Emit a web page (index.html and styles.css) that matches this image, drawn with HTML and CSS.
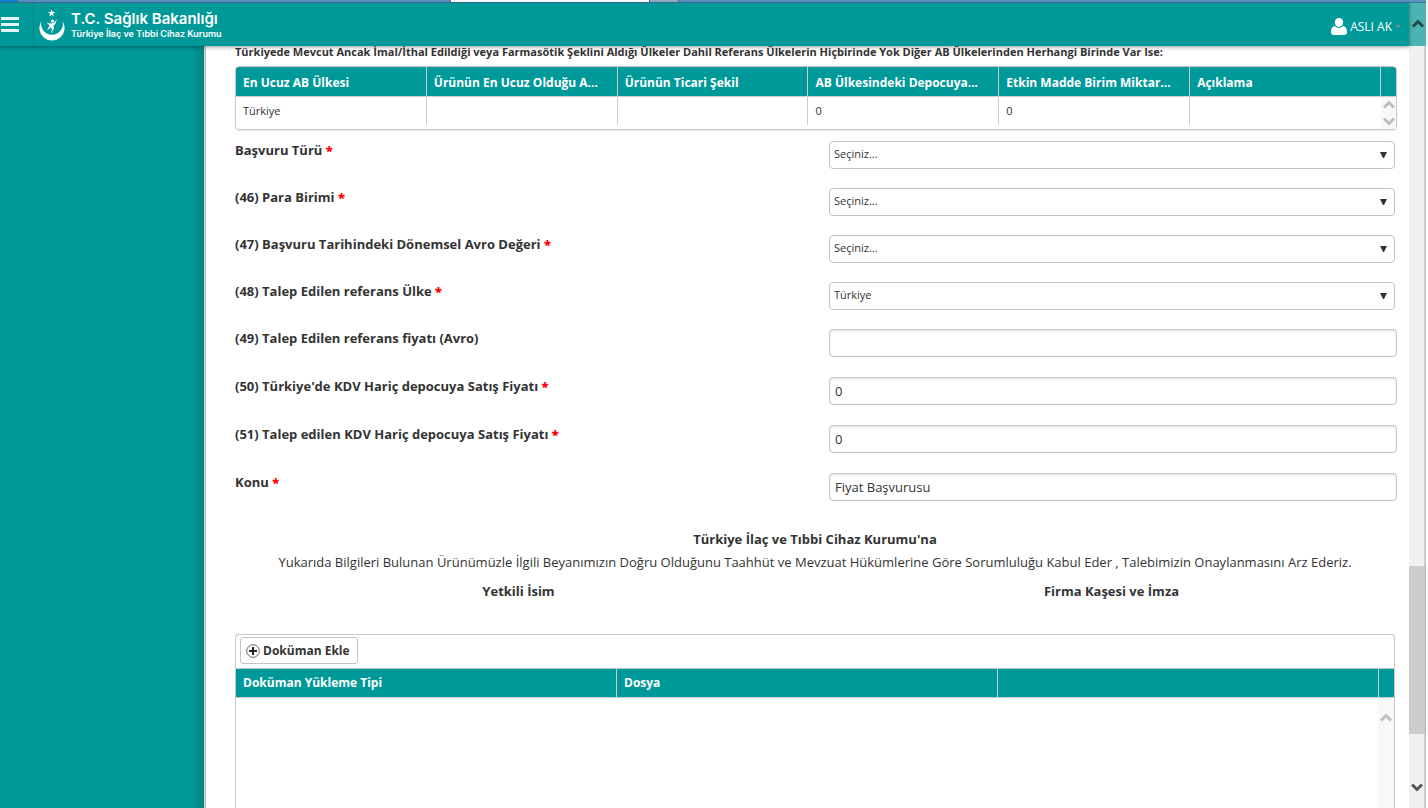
FILE: index.html
```html
<!DOCTYPE html>
<html lang="tr">
<head>
<meta charset="utf-8">
<title>Türkiye İlaç ve Tıbbi Cihaz Kurumu</title>
<link rel="stylesheet" href="styles.css">
</head>
<body>
<div class="tabstrip"><span class="tab-start"></span><span class="tab-active"></span><span class="tab-new"></span></div>
<div class="window">
  <div class="app">
    <header class="topbar">
      <button class="menu" type="button" aria-label="Menü"><svg width="18" height="15" viewBox="0 0 18 15"><path d="M0 0h18v3H0zM0 6h18v3H0zM0 12h18v3H0z" fill="#e4f3f3"/></svg></button>
      <div class="brand">
        <svg class="emblem" width="28" height="32" viewBox="0 0 28 32">
          <path d="M3.500 12A12.600 12.600 0 1 0 24.500 12A10.900 10.900 0 1 1 3.500 12Z" fill="#fff"/>
          <path d="M13.500 0.500l1 2.300 2.600.2-2 1.700.7 2.400-2.200-1.200-2.200 1.300.6-2.500-1.900-1.600 2.500-.2z" fill="#fff"/>
          <circle cx="14.500" cy="12" r="1.600" fill="#fff"/>
          <path d="M8.500 13.500l4 1 3.500-.5 3-4-1.500 4.500-2 2.500.5 2.500-3 5 1-4.700-1.500-1.300-3.500 3 2.600-5z" fill="#fff"/>
        </svg>
        <div class="brand-text"><span class="brand-name">T.C. Sağlık Bakanlığı</span><span class="brand-sub">Türkiye İlaç ve Tıbbi Cihaz Kurumu</span></div>
      </div>
      <button class="user" type="button">
        <svg width="16" height="17" viewBox="0 0 16 17"><path d="M8 0C5.300 0 3.800 1.900 3.800 4.300C3.800 7 5.600 9 8 9s4.200-2 4.200-4.700C12.200 1.900 10.700 0 8 0zM4 8C1 8.500 0 11 0 14.200C0 16 1 17 2.600 17h10.800C15 17 16 16 16 14.200C16 11 15 8.500 12 8C10.900 9.300 9.500 10 8 10S5.100 9.300 4 8z" fill="#fff"/></svg>
        <span>ASLI AK</span>
        <svg width="6" height="3" viewBox="0 0 6 3"><path d="M0 0h6L3 3z" fill="#7f8f8f"/></svg>
      </button>
    </header>
    <div class="body">
      <nav class="sidebar"></nav>
      <main class="content">
        <h2 class="section-title">Türkiyede Mevcut Ancak İmal/İthal Edildiği veya Farmasötik Şeklini Aldığı Ülkeler Dahil Referans Ülkelerin Hiçbirinde Yok Diğer AB Ülkelerinden Herhangi Birinde Var Ise:</h2>
        <div class="grid-box">
          <table class="grid">
            <thead><tr><th>En Ucuz AB Ülkesi</th><th>Ürünün En Ucuz Olduğu A...</th><th>Ürünün Ticari Şekil</th><th>AB Ülkesindeki Depocuya...</th><th>Etkin Madde Birim Miktar...</th><th>Açıklama</th><th class="scroll-col"></th></tr></thead>
            <tbody><tr><td>Türkiye</td><td></td><td></td><td>0</td><td>0</td><td class="last"></td><td class="scroll-cell" rowspan="2">
              <div class="mini-scroll"><svg width="12" height="9" viewBox="0 0 12 9"><path d="M1 7.500L6 2.500L11 7.500" fill="none" stroke="#bebebe" stroke-width="3"/></svg><svg width="12" height="9" viewBox="0 0 12 9"><path d="M1 1.500L6 6.500L11 1.500" fill="none" stroke="#bebebe" stroke-width="3"/></svg></div></td></tr>
              <tr class="filler"><td colspan="6"></td></tr></tbody>
          </table>
        </div>
        <form class="form">
          <div class="row"><label for="tur">Başvuru Türü <b>*</b></label><div class="pick"><select id="tur"><option>Seçiniz...</option></select><svg class="arrow" width="7" height="6" viewBox="0 0 7 6"><path d="M0 0h7L4 6H3z"/></svg></div></div>
          <div class="row"><label for="para">(46) Para Birimi <b>*</b></label><div class="pick"><select id="para"><option>Seçiniz...</option></select><svg class="arrow" width="7" height="6" viewBox="0 0 7 6"><path d="M0 0h7L4 6H3z"/></svg></div></div>
          <div class="row"><label for="avro">(47) Başvuru Tarihindeki Dönemsel Avro Değeri <b>*</b></label><div class="pick"><select id="avro"><option>Seçiniz...</option></select><svg class="arrow" width="7" height="6" viewBox="0 0 7 6"><path d="M0 0h7L4 6H3z"/></svg></div></div>
          <div class="row"><label for="ulke">(48) Talep Edilen referans Ülke <b>*</b></label><div class="pick"><select id="ulke"><option>Türkiye</option></select><svg class="arrow" width="7" height="6" viewBox="0 0 7 6"><path d="M0 0h7L4 6H3z"/></svg></div></div>
          <div class="row tall"><label for="ref">(49) Talep Edilen referans fiyatı (Avro)</label><input id="ref" type="text"></div>
          <div class="row tall"><label for="kdv">(50) Türkiye'de KDV Hariç depocuya Satış Fiyatı <b>*</b></label><input id="kdv" type="text" value="0"></div>
          <div class="row tall"><label for="talep">(51) Talep edilen KDV Hariç depocuya Satış Fiyatı <b>*</b></label><input id="talep" type="text" value="0"></div>
          <div class="row tall"><label for="konu">Konu <b>*</b></label><input id="konu" type="text" value="Fiyat Başvurusu"></div>
        </form>
        <section class="statement">
          <h3>Türkiye İlaç ve Tıbbi Cihaz Kurumu'na</h3>
          <p>Yukarıda Bilgileri Bulunan Ürünümüzle İlgili Beyanımızın Doğru Olduğunu Taahhüt ve Mevzuat Hükümlerine Göre Sorumluluğu Kabul Eder , Talebimizin Onaylanmasını Arz Ederiz.</p>
          <div class="signatures"><strong>Yetkili İsim</strong><strong>Firma Kaşesi ve İmza</strong></div>
        </section>
        <section class="documents">
          <div class="toolbar"><button class="add" type="button"><svg width="14" height="14" viewBox="0 0 14 14"><circle cx="7" cy="7" r="6.300" fill="none" stroke="#666" stroke-width="1"/><path d="M3 7h8M7 3v8" stroke="#222" stroke-width="2"/></svg>Doküman Ekle</button></div>
          <table class="grid doc-grid">
            <thead><tr><th>Doküman Yükleme Tipi</th><th>Dosya</th><th></th><th class="scroll-col"></th></tr></thead>
          </table>
          <div class="doc-body"><div class="doc-scroll"><svg width="12" height="9" viewBox="0 0 12 9"><path d="M1 7.500L6 2.500L11 7.500" fill="none" stroke="#bebebe" stroke-width="3"/></svg></div></div>
        </section>
      </main>
    </div>
  </div>
  <div class="page-scroll">
    <div class="scroll-up"><svg width="12" height="9" viewBox="0 0 12 9"><path d="M1 7.500L6 2.500L11 7.500" fill="none" stroke="#1d4a4b" stroke-width="3"/></svg></div>
    <div class="track-before"></div><div class="thumb"></div><div class="track-after"></div>
    <div class="scroll-down"><svg width="12" height="9" viewBox="0 0 12 9"><path d="M1 1.500L6 6.500L11 1.500" fill="none" stroke="#555" stroke-width="3"/></svg></div>
  </div>
</div>
</body>
</html>
```

FILE: styles.css
```css
* { box-sizing: border-box; }
body {
  margin: 0;
  height: 100vh;
  overflow: hidden;
  display: flex;
  flex-direction: column;
  background: #fff;
  color: #333;
  font: 13px/18px "Open Sans", sans-serif;
}
button, input, select { font-family: inherit; color: inherit; }
svg { display: block; flex: none; }

.tabstrip { display: flex; flex: none; height: 3px; margin-right: 2px; background: #5a93bf; border-bottom: 1px solid #44739c; }
.tab-start { width: 18px; margin-right: 432px; background: #0a84d0; }
.tab-active { width: 200px; background: #fff; border: solid #44739c; border-width: 0 1px; }
.tab-new { width: 29px; background: #93afc5; border-right: 1px solid #44739c; }

.window { display: flex; flex: 1; min-height: 0; margin-right: 2px; }
.app { display: flex; flex-direction: column; flex: 1; min-width: 0; }

.topbar {
  position: relative;
  display: flex;
  flex: none;
  align-items: stretch;
  height: 43px;
  background: #009999;
  box-shadow: 0 1px 4px rgba(0, 0, 0, .4);
}
.menu { width: 34px; padding: 0 0 0 1px; border: 0; border-right: 1px solid #0a8585; background: none; }
.brand { display: flex; align-items: center; gap: 5px; padding-left: 4px; color: #fff; font-family: Inter, sans-serif; }
.brand-text { display: flex; flex-direction: column; white-space: nowrap; }
.brand-name { font-size: 15px; line-height: 17px; font-weight: 600; }
.brand-sub { font-size: 9px; line-height: 13px; font-weight: 600; }
.user { display: flex; align-items: center; gap: 3px; margin-left: auto; padding: 4px 8px 0 0; border: 0; background: none; color: #fff; font-size: 12px; }

.body { display: flex; flex: 1; min-height: 0; }
.sidebar { flex: none; width: 205px; background: linear-gradient(to left, #008484, #009999 12px); border-right: 1px solid #d8d8d8; }
.content { display: flex; flex-direction: column; flex: 1; min-width: 0; overflow: hidden; padding: 0 12px 0 29px; border-left: 1px solid #bbb; }

.section-title { flex: none; margin: 0 0 8px; font-size: 11px; line-height: 12px; white-space: nowrap; }
.grid-box { flex: none; border: 1px solid #c8c8c8; border-radius: 4px; box-shadow: 0 1px 2px rgba(0, 0, 0, .1); overflow: hidden; }
.grid { width: 100%; table-layout: fixed; border-collapse: separate; border-spacing: 0; }
.grid th {
  height: 30px;
  padding: 2px 6px 0 7px;
  overflow: hidden;
  background: #009999;
  border-right: 1px solid #ccc;
  border-bottom: 1px solid #ccc;
  color: #fff;
  font-size: 12px;
  text-align: left;
  text-overflow: ellipsis;
  white-space: nowrap;
}
.grid td { height: 28px; padding: 0 7px; border-right: 1px solid #ccc; font-size: 11px; }
.grid td.last { border-right: 0; }
.grid .scroll-col { width: 15px; padding: 0; border-right: 0; }
.grid .scroll-cell { padding: 0; background: #f8f8f8; border-right: 0; }
.grid .filler td { height: 4px; border: 0; }
.mini-scroll { display: flex; flex-direction: column; align-items: center; gap: 8px; }

.form { flex: none; margin-top: 11px; }
.row { display: grid; grid-template-columns: 1fr 1fr; column-gap: 26px; align-items: start; height: 47px; }
.row.tall { height: 48px; }
label { font-weight: 700; }
label b { color: #f00; }
.pick { position: relative; margin-right: 2px; }
.pick select { display: block; width: 100%; height: 28px; padding: 0 4px 3px; appearance: none; background: #fff; border: 1px solid #c4c4c4; border-radius: 4px; font-size: 11px; }
.arrow { position: absolute; top: 11px; right: 8px; fill: #333; pointer-events: none; }
.row input { width: 100%; height: 28px; padding: 0 5px; border: 1px solid #c4c4c4; border-radius: 4px; box-shadow: inset 0 1px 2px rgba(0, 0, 0, .12); font-size: 13px; }

.statement { flex: none; margin: 9px 2px 0 0; text-align: center; }
.statement h3 { margin: 0 0 5px; font-size: 13px; }
.statement p { margin: 0 0 11px; white-space: nowrap; }
.signatures { display: grid; grid-template-columns: 1fr 1fr; column-gap: 26px; }

.documents { display: flex; flex-direction: column; flex: 1; min-height: 0; margin: 34px 2px 0 0; border: 1px solid #c8c8c8; border-bottom: 0; border-radius: 4px 4px 0 0; }
.toolbar { flex: none; padding: 2px 4px 4px; border-bottom: 1px solid #c8c8c8; }
.add { display: flex; align-items: center; gap: 3px; height: 27px; padding: 0 7px 0 5px; border: 1px solid #c4c4c4; border-radius: 3px; background: #fff; font-size: 12px; font-weight: 700; }
.doc-grid { flex: none; }
.doc-grid th { height: 29px; padding-top: 0; }
.doc-body { display: flex; flex: 1; justify-content: flex-end; }
.doc-scroll { display: flex; justify-content: center; width: 16px; padding-top: 15px; background: #f8f8f8; }

.page-scroll { display: flex; flex-direction: column; flex: none; width: 17px; background: #f0f0f0; border-right: 2px solid #ccc; }
.scroll-up { display: flex; justify-content: center; flex: none; height: 43px; padding-top: 16px; margin-right: -2px; background: #4db2b2; }
.track-before { flex: 520; }
.thumb { flex: 168; margin-right: -2px; background: #cdcdcd; border-right: 1px solid #b0b0b0; }
.track-after { flex: 46; }
.scroll-down { display: flex; justify-content: center; flex: none; height: 28px; padding-top: 3px; }
```
